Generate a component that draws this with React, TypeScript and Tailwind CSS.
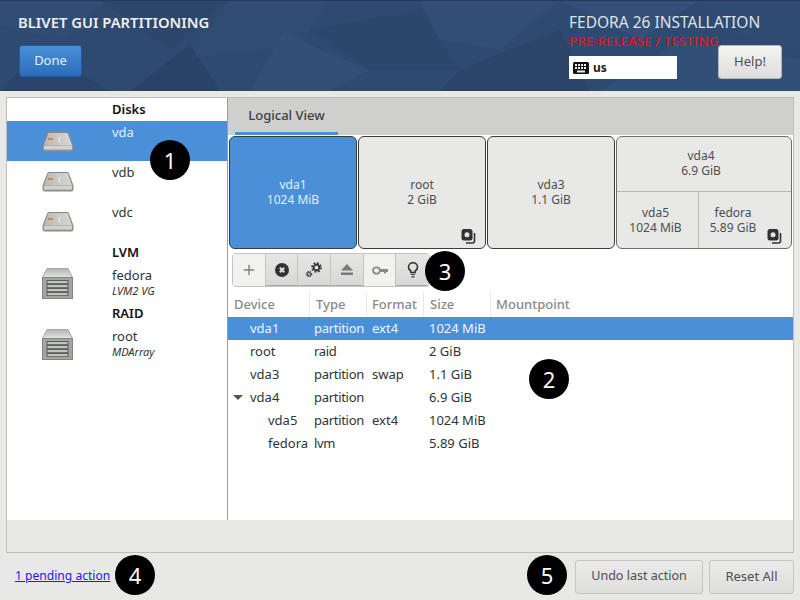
import React from 'react';
import { Plus } from 'lucide-react';

const font = "font-['Noto_Sans',sans-serif]";

const disks = ['vda', 'vdb', 'vdc'];
const rows = [
  { name: 'vda1', type: 'partition', format: 'ext4', size: '1024 MiB', indent: 'pl-[22px]', selected: true },
  { name: 'root', type: 'raid', format: '', size: '2 GiB', indent: 'pl-[22px]' },
  { name: 'vda3', type: 'partition', format: 'swap', size: '1.1 GiB', indent: 'pl-[22px]' },
  { name: 'vda4', type: 'partition', format: '', size: '6.9 GiB', indent: 'pl-[22px]', open: true },
  { name: 'vda5', type: 'partition', format: 'ext4', size: '1024 MiB', indent: 'pl-[40px]' },
  { name: 'fedora', type: 'lvm', format: '', size: '5.89 GiB', indent: 'pl-[40px]' },
];

const HeaderArt = () => (
  <svg className="absolute inset-0 h-full w-full" viewBox="0 0 800 91" preserveAspectRatio="none">
    <rect width="800" height="91" fill="#2f4a70" />
    <polygon points="0,0 110,0 60,40 0,25" fill="#324d74" />
    <polygon points="100,0 230,0 170,50" fill="#2d476c" />
    <polygon points="230,0 330,0 300,45 180,60" fill="#314c73" />
    <polygon points="250,91 285,30 310,45 370,70 330,91" fill="#334f76" />
    <polygon points="130,91 190,45 220,91" fill="#2a4267" />
    <polygon points="310,30 420,10 460,70 370,70" fill="#2c476c" />
    <polygon points="420,0 560,0 500,50 440,40" fill="#324e74" />
    <polygon points="460,70 560,30 590,91 440,91" fill="#2b4468" />
    <polygon points="560,0 700,0 640,40" fill="#345077" />
    <polygon points="600,91 680,40 800,60 800,91" fill="#325077" />
    <polygon points="700,0 800,0 800,50 720,30" fill="#2f4b72" />
    <polygon points="0,91 40,50 110,91" fill="#2b4469" />
    <rect width="800" height="1" fill="#26395a" />
  </svg>
);

const DiskIcon = () => (
  <svg width="32" height="20" viewBox="0 0 32 20">
    <defs>
      <linearGradient id="diskTop" x1="0" y1="0" x2="1" y2="0">
        <stop offset="0" stopColor="#b9b9b6" />
        <stop offset="1" stopColor="#d8d8d5" />
      </linearGradient>
    </defs>
    <path d="M6 .5h20l5 13v4a1.500 1.500 0 0 1-1.500 1.500h-27A1.500 1.500 0 0 1 1 17.500v-4z" fill="#9a9a97" stroke="#8a8a87" />
    <path d="M6.500 1h19l4.500 12.500H2z" fill="url(#diskTop)" />
    <rect x="6" y="6" width="5" height="2" fill="#d9863f" />
    <rect x="17" y="5" width="1" height="5" fill="#eeeeec" />
    <rect x="2" y="14" width="28" height="3.500" fill="#d2d2cf" />
  </svg>
);

const ServerIcon = () => (
  <svg width="31" height="31" viewBox="0 0 31 31">
    <defs>
      <linearGradient id="srvTop" x1="0" y1="0" x2="0" y2="1">
        <stop offset="0" stopColor="#b3b5b0" />
        <stop offset="1" stopColor="#e4e5e2" />
      </linearGradient>
    </defs>
    <path d="M5 .5h21l4.500 9H.5z" fill="url(#srvTop)" stroke="#a5a7a2" />
    <rect x=".5" y="9.500" width="30" height="21" fill="#a3a5a0" stroke="#85877f" />
    <rect x="4.500" y="12" width="22" height="16" fill="#5b5d5a" />
    {[12, 16, 20, 24].map(y => (
      <rect key={y} x="5.500" y={y + 1} width="20" height="2.200" fill="#c2c4bf" />
    ))}
  </svg>
);

const StackIcon = () => (
  <svg width="15" height="16" viewBox="0 0 15 16" className="absolute bottom-[4px] right-[9px]">
    <path d="M13.500 5v8a2 2 0 0 1-2 2H5" fill="none" stroke="#2e3436" strokeWidth="1.600" />
    <rect x=".5" y="1" width="11" height="11.500" rx="2.500" fill="#2e3436" />
    <circle cx="6" cy="6.700" r="2.500" fill="#e8e8e7" />
  </svg>
);

const Marker = ({ n, className }: { n: number; className: string }) => (
  <div className={`absolute flex h-10 w-10 items-center justify-center rounded-full bg-black text-[22px] text-white ${className}`}>
    {n}
  </div>
);

const Block = ({ title, size, selected, stack }: { title: string; size: string; selected?: boolean; stack?: boolean }) => (
  <div
    className={`relative flex h-[113px] w-[128px] flex-col items-center justify-center rounded-[6px] border border-[#3a3d3e] pb-[2px] text-[12px] leading-[15px] ${
      selected ? 'bg-[#4a90d9] text-[#e4eef9]' : 'bg-[#e8e8e7] text-[#4b4f50]'
    }`}
  >
    <span>{title}</span>
    <span>{size}</span>
    {stack && <StackIcon />}
  </div>
);

const ToolButton = ({ children, active }: { children: React.ReactNode; active?: boolean }) => (
  <div
    className={`flex h-full w-[33px] items-center justify-center border-r border-[#c4c4c1] last:border-r-0 ${
      active ? 'bg-gradient-to-b from-[#e6e6e5] to-[#d8d8d6] border-b border-b-[#a9a9a6]' : 'bg-[#f1f1f0]'
    }`}
  >
    {children}
  </div>
);

export default function App() {
  return (
    <div className={`relative flex h-[600px] w-[800px] flex-col overflow-hidden bg-[#e8e8e7] ${font}`}>
      {/* header */}
      <div className="relative h-[91px] shrink-0 overflow-hidden">
        <HeaderArt />
        <div className="relative flex h-full justify-between">
          <div className="pl-[18px] pt-[12px]">
            <div className="text-[14.8px] font-semibold leading-[20px] text-[#eeeeec]">BLIVET GUI PARTITIONING</div>
            <div className="ml-[1px] mt-[13px] flex h-[32px] w-[63px] items-center justify-center rounded-[3px] border border-[#1f5aa3] bg-gradient-to-b from-[#4a90d9] to-[#2a6cba] text-[13px] text-[#e8eff8]">
              Done
            </div>
          </div>
          <div className="flex items-start pr-[18px]">
            <div className="w-[108px] whitespace-nowrap pt-[12px]">
              <div className="text-[15.5px] leading-[20px] text-[#dfe3e8]">FEDORA 26 INSTALLATION</div>
              <div className="text-[13.4px] font-medium leading-[18px] text-[#ee1111]">PRE-RELEASE / TESTING</div>
              <div className="mt-[6px] flex h-[23px] w-[108px] items-center gap-[4px] bg-white pl-[4px] text-[12px] font-bold text-[#222]">
                <svg width="16" height="12" viewBox="0 0 16 12">
                  <rect width="16" height="12" rx="1.500" fill="#111" />
                  {[2, 5, 8, 11].map(x => (
                    <React.Fragment key={x}>
                      <rect x={x} y="2" width="2" height="2" fill="#eee" />
                      <rect x={x} y="5" width="2" height="2" fill="#eee" />
                    </React.Fragment>
                  ))}
                  <rect x="4" y="8.500" width="8" height="2" fill="#eee" />
                </svg>
                us
              </div>
            </div>
            <div className="ml-[41px] mt-[45px] flex h-[34px] w-[64px] items-center justify-center rounded-[3px] border border-[#b5b5b2] bg-gradient-to-b from-[#f4f4f3] to-[#dddddb] text-[13px] text-[#4b4f50]">
              Help!
            </div>
          </div>
        </div>
      </div>

      {/* main frame */}
      <div className="mx-[6px] mt-[6px] flex h-[456px] flex-col border border-[#bdbdbb]">
        <div className="flex h-[422px]">
          <div className="w-[220px] shrink-0 bg-white text-[13px] text-[#2e3436]">
            <div className="flex h-[23px] items-center pl-[105px] text-[13px] font-semibold text-[#111]">Disks</div>
            {disks.map((d, i) => (
              <div key={d} className={`flex h-10 ${i === 0 ? 'bg-[#4a90d9] text-[#e4eef9]' : ''}`}>
                <div className="w-[105px] pl-[35px] pt-[11px]">
                  <DiskIcon />
                </div>
                <span className="leading-[22px]">{d}</span>
              </div>
            ))}
            <div className="flex h-[23px] items-center pl-[105px] font-semibold text-[#111]">LVM</div>
            <div className="flex h-[38px]">
              <div className="w-[105px] pl-[35px] pt-[4px]">
                <ServerIcon />
              </div>
              <div className="pt-[3px] leading-[16px]">
                <div>fedora</div>
                <div className="text-[11px] italic">LVM2 VG</div>
              </div>
            </div>
            <div className="flex h-[23px] items-center pl-[105px] font-semibold text-[#111]">RAID</div>
            <div className="flex h-[39px]">
              <div className="w-[105px] pl-[35px] pt-[4px]">
                <ServerIcon />
              </div>
              <div className="pt-[4px] leading-[15px]">
                <div>root</div>
                <div className="text-[11px] italic">MDArray</div>
              </div>
            </div>
          </div>

          <div className="flex min-w-0 flex-1 flex-col border-l border-[#9b9b98] bg-white">
            {/* tabs */}
            <div className="flex h-[37px] shrink-0 bg-[#cfcfcd]">
              <div className="ml-[7px] flex h-full w-[103px] items-center justify-center border-b-[3px] border-[#4a90d9] pt-[2px] text-[13px] font-medium text-[#3b3f40]">
                Logical View
              </div>
            </div>

            {/* blocks */}
            <div className="mt-[1px] flex gap-[1px] pl-[1px]">
              <Block title="vda1" size="1024 MiB" selected />
              <Block title="root" size="2 GiB" stack />
              <Block title="vda3" size="1.1 GiB" />
              <div className="flex h-[113px] w-[176px] flex-col rounded-[6px] border border-[#6b6e6f] bg-[#e8e8e7] text-[12px] leading-[15px] text-[#4b4f50]">
                <div className="flex h-[55px] flex-col items-center justify-center border-b border-[#b8b8b5] pb-[2px] pr-[6px]">
                  <span>vda4</span>
                  <span>6.9 GiB</span>
                </div>
                <div className="relative flex flex-1">
                  <div className="flex w-[82px] flex-col items-center justify-center border-r border-[#b8b8b5] pr-[4px]">
                    <span>vda5</span>
                    <span>1024 MiB</span>
                  </div>
                  <div className="flex flex-1 flex-col items-center justify-center pr-[24px]">
                    <span>fedora</span>
                    <span>5.89 GiB</span>
                  </div>
                  <StackIcon />
                </div>
              </div>
            </div>

            {/* toolbar */}
            <div className="ml-[4px] mt-[4px] flex h-[34px] w-[198px] shrink-0 overflow-hidden rounded-[4px] border border-[#c4c4c1]">
              <ToolButton>
                <Plus size={16} strokeWidth={2} className="text-[#7d7f7b]" />
              </ToolButton>
              <ToolButton active>
                <svg width="14" height="14" viewBox="0 0 14 14">
                  <circle cx="7" cy="7" r="7" fill="#2e3436" />
                  <path d="M4.800 4.800l4.400 4.400M9.200 4.800l-4.400 4.400" stroke="#e0e0de" strokeWidth="2" />
                </svg>
              </ToolButton>
              <ToolButton active>
                <svg width="18" height="16" viewBox="0 0 18 16">
                  <circle cx="11.500" cy="5.500" r="2.800" fill="none" stroke="#2e3436" strokeWidth="1.800" />
                  <circle cx="11.500" cy="5.500" r="4.400" fill="none" stroke="#2e3436" strokeWidth="1.800" strokeDasharray="1.800 1.650" />
                  <circle cx="4" cy="12" r="1.600" fill="none" stroke="#4b4f50" strokeWidth="1.200" />
                  <circle cx="4" cy="12" r="2.700" fill="none" stroke="#4b4f50" strokeWidth="1.200" strokeDasharray="1.200 1" />
                </svg>
              </ToolButton>
              <ToolButton active>
                <svg width="12" height="11" viewBox="0 0 12 11">
                  <path d="M6 0l6 6.500H0z" fill="#777a7a" />
                  <rect y="8.500" width="12" height="2.500" fill="#777a7a" />
                </svg>
              </ToolButton>
              <ToolButton>
                <svg width="16" height="9" viewBox="0 0 16 9">
                  <ellipse cx="4.500" cy="4.500" rx="3.500" ry="3.200" fill="none" stroke="#888a85" strokeWidth="1.800" />
                  <path d="M8 3h8v3h-2v1.500h-2V6H8z" fill="#888a85" />
                </svg>
              </ToolButton>
              <ToolButton active>
                <svg width="12" height="16" viewBox="0 0 12 16">
                  <path d="M3.800 10.500V9C2.500 8 1.500 7 1.500 5.200a4.500 4.500 0 0 1 9 0C10.500 7 9.500 8 8.200 9v1.500z" fill="none" stroke="#2e3436" strokeWidth="1.600" />
                  <path d="M4 12.500h4M4.500 14.800h3" stroke="#2e3436" strokeWidth="1.200" />
                </svg>
              </ToolButton>
            </div>

            {/* table */}
            <div className="mt-[5px] text-[13px] text-[#2e3436]">
              <div className="flex h-[25px] items-center font-medium text-[#888a85]">
                <span className="flex h-full w-[82px] items-center border-r border-[#e8e8e7] pl-[6px]">Device</span>
                <span className="flex h-full w-[57px] items-center border-r border-[#e8e8e7] pl-[6px]">Type</span>
                <span className="flex h-full w-[57px] items-center border-r border-[#e8e8e7] pl-[5px]">Format</span>
                <span className="flex h-full w-[67px] items-center border-r border-[#e8e8e7] pl-[6px]">Size</span>
                <span className="pl-[5px]">Mountpoint</span>
              </div>
              {rows.map(r => (
                <div key={r.name} className={`relative flex h-[23px] items-center ${r.selected ? 'bg-[#4a90d9] text-[#eef4fb]' : ''}`}>
                  <span className={`w-[82px] ${r.indent}`}>{r.name}</span>
                  {r.open && <span className="absolute left-[5px] top-[9px] h-0 w-0 border-x-[5px] border-t-[5px] border-x-transparent border-t-[#555]" />}
                  <span className="w-[58px] pl-[4px] tracking-[-0.3px]">{r.type}</span>
                  <span className="w-[56px] pl-[4px]">{r.format}</span>
                  <span className="pl-[5px]">{r.size}</span>
                </div>
              ))}
            </div>
          </div>
        </div>
        <div className="flex-1 bg-[#e8e8e7]" />
      </div>

      {/* footer */}
      <div className="flex flex-1 items-center justify-between pl-[15px] pr-[6px]">
        <a className="text-[12.1px] text-[#1a1aff] underline">1 pending action</a>
        <div className="flex gap-[6px]">
          <div className="flex h-[34px] w-[128px] items-center justify-center rounded-[3px] border border-[#c4c4c1] bg-gradient-to-b from-[#ebebea] to-[#dededc] text-[12.5px] text-[#4b4f50]">
            Undo last action
          </div>
          <div className="flex h-[34px] w-[85px] items-center justify-center rounded-[3px] border border-[#c4c4c1] bg-gradient-to-b from-[#ebebea] to-[#dededc] text-[13px] text-[#4b4f50]">
            Reset All
          </div>
        </div>
      </div>

      <Marker n={1} className="left-[150px] top-[140px]" />
      <Marker n={2} className="left-[529px] top-[359px]" />
      <Marker n={3} className="left-[425px] top-[251px]" />
      <Marker n={4} className="left-[115px] top-[555px]" />
      <Marker n={5} className="left-[527px] top-[555px]" />
    </div>
  );
}
